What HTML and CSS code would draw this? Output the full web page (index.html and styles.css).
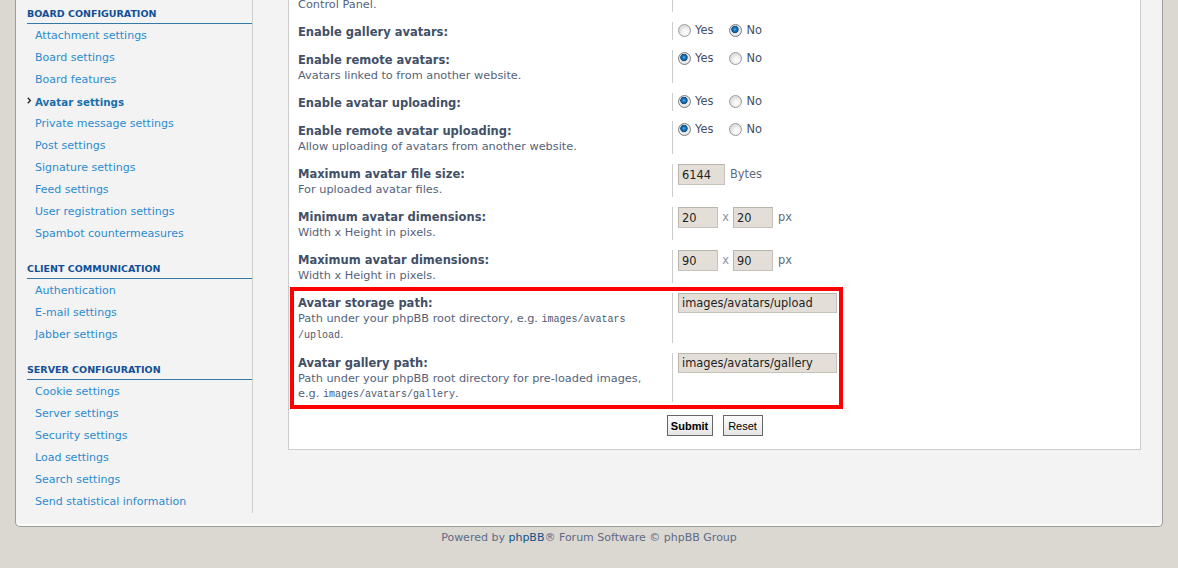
FILE: index.html
```html
<!DOCTYPE html>
<html lang="en">
<head>
<meta charset="utf-8">
<title>Avatar settings</title>
<link rel="stylesheet" href="styles.css">
</head>
<body>
<div class="page">
  <div class="panel">
    <nav class="menu">
      <div class="block">
        <p class="menu-head">BOARD CONFIGURATION</p>
        <ul>
          <li><a href="#">Attachment settings</a></li>
          <li><a href="#">Board settings</a></li>
          <li><a href="#">Board features</a></li>
          <li class="active"><svg class="marker" width="5" height="7" viewBox="0 0 5 7"><polyline points="0.8,0.8 3.4,3.5 0.8,6.2" fill="none" stroke="#222" stroke-width="1.3"/></svg><a href="#">Avatar settings</a></li>
          <li><a href="#">Private message settings</a></li>
          <li><a href="#">Post settings</a></li>
          <li><a href="#">Signature settings</a></li>
          <li><a href="#">Feed settings</a></li>
          <li><a href="#">User registration settings</a></li>
          <li><a href="#">Spambot countermeasures</a></li>
        </ul>
      </div>
      <div class="block">
        <p class="menu-head">CLIENT COMMUNICATION</p>
        <ul>
          <li><a href="#">Authentication</a></li>
          <li><a href="#">E-mail settings</a></li>
          <li><a href="#">Jabber settings</a></li>
        </ul>
      </div>
      <div class="block">
        <p class="menu-head">SERVER CONFIGURATION</p>
        <ul>
          <li><a href="#">Cookie settings</a></li>
          <li><a href="#">Server settings</a></li>
          <li><a href="#">Security settings</a></li>
          <li><a href="#">Load settings</a></li>
          <li><a href="#">Search settings</a></li>
          <li><a href="#">Send statistical information</a></li>
        </ul>
      </div>
    </nav>

    <main class="main">
      <form class="box" action="#">
        <dl class="row">
          <dt><span class="desc">Control Panel.</span></dt>
          <dd></dd>
        </dl>
        <dl class="row">
          <dt><label class="label">Enable gallery avatars:</label></dt>
          <dd class="radios">
            <label class="opt"><input type="radio" name="gal"> Yes</label>
            <label class="opt"><input type="radio" name="gal" checked> No</label>
          </dd>
        </dl>
        <dl class="row">
          <dt><label class="label">Enable remote avatars:</label><span class="desc">Avatars linked to from another website.</span></dt>
          <dd class="radios">
            <label class="opt"><input type="radio" name="rem" checked> Yes</label>
            <label class="opt"><input type="radio" name="rem"> No</label>
          </dd>
        </dl>
        <dl class="row">
          <dt><label class="label">Enable avatar uploading:</label></dt>
          <dd class="radios">
            <label class="opt"><input type="radio" name="upl" checked> Yes</label>
            <label class="opt"><input type="radio" name="upl"> No</label>
          </dd>
        </dl>
        <dl class="row">
          <dt><label class="label">Enable remote avatar uploading:</label><span class="desc">Allow uploading of avatars from another website.</span></dt>
          <dd class="radios">
            <label class="opt"><input type="radio" name="rupl" checked> Yes</label>
            <label class="opt"><input type="radio" name="rupl"> No</label>
          </dd>
        </dl>
        <dl class="row">
          <dt><label class="label">Maximum avatar file size:</label><span class="desc">For uploaded avatar files.</span></dt>
          <dd class="fields">
            <input class="text w-size" type="text" value="6144"><span class="unit">Bytes</span>
          </dd>
        </dl>
        <dl class="row">
          <dt><label class="label">Minimum avatar dimensions:</label><span class="desc">Width x Height in pixels.</span></dt>
          <dd class="fields">
            <input class="text w-dim" type="text" value="20"><span class="times">x</span><input class="text w-dim" type="text" value="20"><span class="unit">px</span>
          </dd>
        </dl>
        <dl class="row">
          <dt><label class="label">Maximum avatar dimensions:</label><span class="desc">Width x Height in pixels.</span></dt>
          <dd class="fields">
            <input class="text w-dim" type="text" value="90"><span class="times">x</span><input class="text w-dim" type="text" value="90"><span class="unit">px</span>
          </dd>
        </dl>

        <div class="highlight">
          <dl class="row">
            <dt><label class="label">Avatar storage path:</label><span class="desc">Path under your phpBB root directory, e.g. <code>images/avatars<wbr>/upload</code>.</span></dt>
            <dd class="fields">
              <input class="text w-path" type="text" value="images/avatars/upload">
            </dd>
          </dl>
          <dl class="row">
            <dt><label class="label">Avatar gallery path:</label><span class="desc">Path under your phpBB root directory for pre-loaded images, e.g. <code>images/avatars/gallery</code>.</span></dt>
            <dd class="fields">
              <input class="text w-path" type="text" value="images/avatars/gallery">
            </dd>
          </dl>
        </div>

        <div class="actions">
          <button class="btn btn-submit" type="button">Submit</button>
          <button class="btn" type="button">Reset</button>
        </div>
      </form>
    </main>
  </div>

  <footer class="footer">Powered by <a href="#">phpBB</a>® Forum Software © phpBB Group</footer>
</div>
</body>
</html>
```

FILE: styles.css
```css
* {
  box-sizing: border-box;
}

html,
body {
  margin: 0;
  padding: 0;
}

body {
  background: #dbd8d1;
  font-family: "DejaVu Sans", Verdana, sans-serif;
  font-size: 11px;
  color: #536482;
  overflow: hidden;
}

.page {
  padding: 0 15px;
}

.panel {
  display: flex;
  background: #f3f3f3;
  border: 1px solid #9c9c9c;
  border-top: 0;
  border-radius: 0 0 5px 5px;
  padding-bottom: 13px;
  box-shadow: inset 0 -2px 0 #fafafa;
}

/* ---------- sidebar ---------- */
.menu {
  width: 237px;
  flex: none;
  border-right: 1px solid #cccccc;
  padding-top: 7px;
}

.block + .block {
  margin-top: 17px;
}

.menu-head {
  margin: 0 0 0 11px;
  padding-bottom: 2px;
  font-size: 9.5px;
  line-height: 14px;
  font-weight: bold;
  color: #115098;
  border-bottom: 1px solid #327aa5;
}

.menu ul {
  list-style: none;
  margin: 1px 0 0;
  padding: 0;
}

.menu li {
  position: relative;
}

.menu li a {
  display: block;
  padding-left: 19px;
  line-height: 22px;
  font-size: 11px;
  color: #2a8bd0;
  text-decoration: none;
}

.menu li.active a {
  font-weight: bold;
  font-size: 10.3px;
  color: #1a6fab;
}

.marker {
  position: absolute;
  left: 11px;
  top: 6px;
}

/* ---------- main ---------- */
.main {
  flex: 1;
  padding: 0 21px 0 35px;
}

.box {
  display: block;
  background: #ffffff;
  border: 1px solid #cccccc;
  margin: -17px 0 0;
  padding: 10px 9px 13px;
}

.row {
  display: grid;
  grid-template-columns: 374px 1fr;
  margin: 0 0 10px;
}

.row dt {
  padding: 3px 10px 0 0;
  line-height: 15px;
}

.label {
  display: block;
  font-size: 11.5px;
  font-weight: bold;
  color: #425067;
}

.desc {
  display: block;
  font-size: 11.3px;
  color: #54637a;
}

.desc code {
  font-family: "Liberation Mono", "Courier New", monospace;
  font-size: 10px;
  line-height: 15px;
  color: #4a5870;
}

.row dd {
  margin: 0;
  border-left: 1px solid #cccccc;
  padding-left: 5px;
}

.radios {
  display: flex;
  align-items: flex-start;
  padding-top: 1px;
}

.opt {
  display: inline-flex;
  align-items: center;
  line-height: 15px;
  font-size: 11.4px;
  color: #425067;
  margin-right: 16px;
}

.opt input {
  appearance: none;
  -webkit-appearance: none;
  width: 13px;
  height: 13px;
  margin: 0 4px 0 0;
  border-radius: 50%;
  border: 1px solid #9a9a9a;
  background: radial-gradient(circle at 60% 65%, #ffffff 0, #f4f4f4 3px, #dedede 6px);
}

.opt input:checked {
  border-color: #7d7d7d;
  background: radial-gradient(circle at 45% 40%, #5cb4ee 0, #1a78bd 1.6px, #0c4f86 3.4px, #d6d6d6 3.9px, #f2f2f2 5px, #e2e2e2 6px);
}

.fields {
  display: flex;
  align-items: flex-start;
}

.text {
  height: 21px;
  margin: 0;
  padding: 0 3px;
  border: 1px solid #c6c2ba;
  border-top-color: #b9b5ad;
  border-left-color: #b9b5ad;
  background: #e3dfd8;
  font-family: "DejaVu Sans", Verdana, sans-serif;
  font-size: 11.4px;
  color: #222;
}

.w-size {
  width: 47px;
}

.w-dim {
  width: 40px;
}

.w-path {
  width: 159px;
  height: 20px;
}

.unit,
.times {
  line-height: 21px;
  font-size: 11.4px;
  color: #5f6b80;
}

.unit {
  margin-left: 5px;
}

.times {
  width: 15px;
  text-align: center;
  color: #8a93a3;
}

.highlight {
  width: 553px;
  margin: -6px 0 0 -8px;
  padding: 2px 0 3px 4px;
  border: 4px solid #ff0000;
}

.highlight .row:last-child {
  margin-bottom: 0;
}

.actions {
  display: flex;
  justify-content: center;
  gap: 10px;
  margin-top: 6px;
}

.btn {
  height: 21px;
  width: 40px;
  margin: 0;
  padding: 0;
  border: 1px solid #666666;
  background: linear-gradient(#fbfbfb, #e6e6e6);
  font-family: "Liberation Sans", Arial, sans-serif;
  font-size: 11px;
  color: #000;
}

.btn-submit {
  width: 46px;
  font-weight: bold;
}

/* ---------- footer ---------- */
.footer {
  padding-top: 4px;
  line-height: 14px;
  text-align: center;
  font-size: 11px;
  color: #5f6a88;
}

.footer a {
  color: #105289;
  text-decoration: none;
}
```
